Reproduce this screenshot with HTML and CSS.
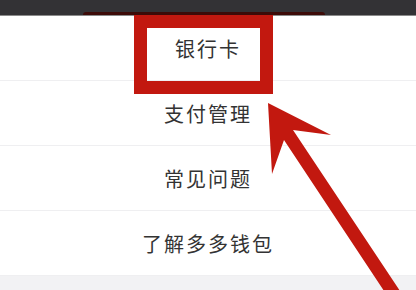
FILE: index.html
```html
<!DOCTYPE html>
<html lang="zh-CN">
<head>
    <meta charset="UTF-8">
    <meta name="viewport" content="width=device-width, initial-scale=1.0">
    <title>钱包设置</title>
    <link rel="stylesheet" href="styles.css">
</head>
<body>
    <div class="topbar">
        <div class="topbar-strip"></div>
    </div>

    <ul class="menu">
        <li class="menu-item">银行卡</li>
        <li class="menu-item">支付管理</li>
        <li class="menu-item">常见问题</li>
        <li class="menu-item">了解多多钱包</li>
    </ul>
    <div class="footer-gap"></div>

    <div class="highlight-box"></div>
    <svg class="arrow" width="416" height="290" viewBox="0 0 416 290">
        <polygon points="268,103 331,135 293,130 406,300 390,300 284,140 272,174" fill="#c2180f"/>
    </svg>
</body>
</html>
```

FILE: styles.css
```css
body {
    margin: 0;
    background-color: #fff;
    font-family: "Noto Sans CJK SC", sans-serif;
    color: #333;
    width: 416px;
    height: 290px;
    overflow: hidden;
    position: relative;
}
.topbar {
    height: 15px;
    background-color: #333235;
    display: flex;
    align-items: flex-end;
    border-bottom: 1px solid #8a8a8a;
}
.topbar-strip {
    margin-left: 83px;
    width: 242px;
    height: 3px;
    background-color: #3d0b08;
    border-radius: 3px 3px 0 0;
}
.menu {
    list-style: none;
    margin: 0;
    padding: 0;
}
.menu-item {
    height: 64px;
    display: flex;
    align-items: center;
    justify-content: center;
    font-size: 20px;
    letter-spacing: 2px;
    border-bottom: 1px solid #efeff1;
}
.footer-gap {
    height: 20px;
    background-color: #f2f2f4;
}
.highlight-box {
    position: absolute;
    left: 134px;
    top: 15px;
    width: 113px;
    height: 53px;
    border: 13px solid #c2180f;
}
.arrow {
    position: absolute;
    left: 0;
    top: 0;
}
```
